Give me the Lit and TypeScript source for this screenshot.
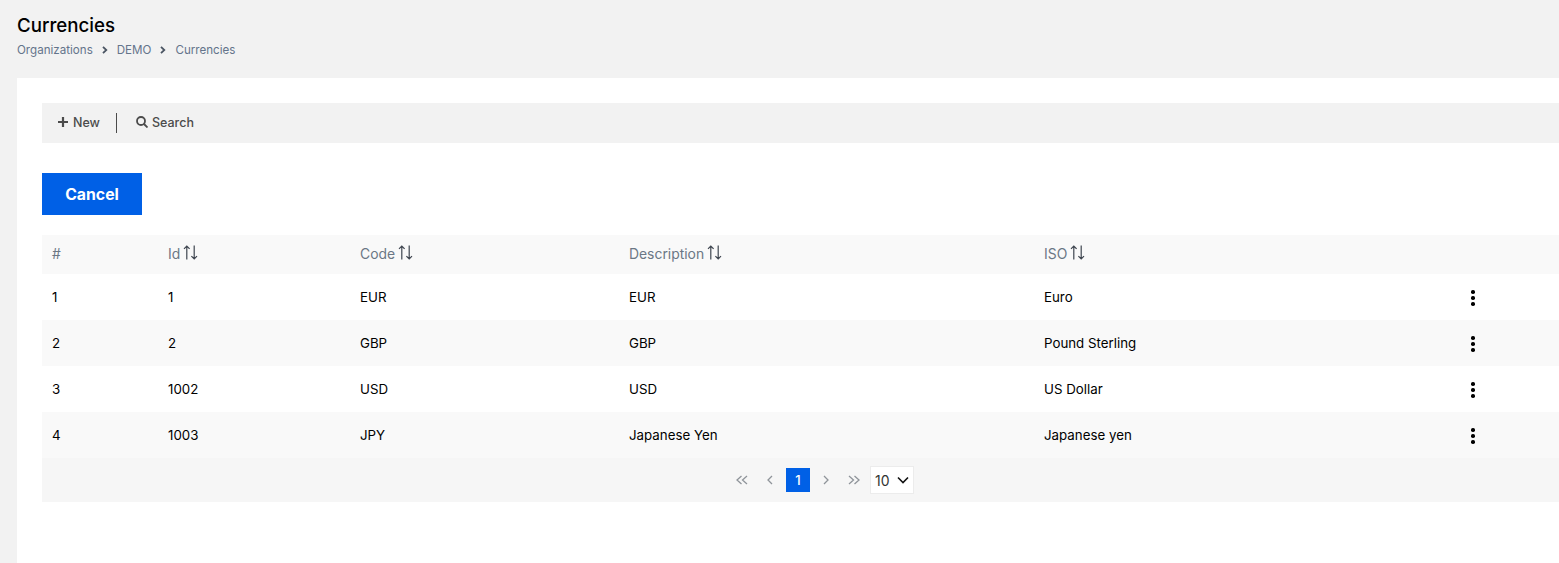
import {css, html, LitElement} from 'lit';
import {customElement} from 'lit/decorators.js';

const rows = [
    ["1", "1", "EUR", "EUR", "Euro"],
    ["2", "2", "GBP", "GBP", "Pound Sterling"],
    ["3", "1002", "USD", "USD", "US Dollar"],
    ["4", "1003", "JPY", "Japanese Yen", "Japanese yen"],
];

const sortIcon = html`<svg class="sort" width="15" height="15" viewBox="0 0 15 15" fill="none" stroke="#3f4650" stroke-width="1.2">
    <path d="M3.8 14.5V1M1 3.9L3.8 1L6.6 3.9"/>
    <path d="M11.2 .5V14M8.4 11.1L11.2 14L14 11.1"/>
</svg>`;

const chevron = html`<svg class="crumb-sep" width="6" height="8" viewBox="0 0 6 8" fill="none" stroke="#4b5563" stroke-width="1.8"><path d="M1 .8L4.3 4L1 7.2"/></svg>`;

const pageIcon = (d: string) => html`<span class="page-btn"><svg width="14" height="14" viewBox="0 0 14 14" fill="none" stroke="#8f949a" stroke-width="1.3"><path d=${d}/></svg></span>`;

@customElement("app-root")
export default class AppRoot extends LitElement {
    static styles = css`
        :host {
            display: block;
            height: 563px;
            overflow: hidden;
            background: #f2f2f2;
            font-family: "Inter", "Open Sans", sans-serif;
            color: #000;
        }

        .page-head { height: 78px; padding: 15px 0 0 17px; box-sizing: border-box; }
        h1 { margin: 0; font-size: 18.7px; line-height: 22px; font-weight: 500; }
        .crumbs {
            display: flex;
            align-items: center;
            gap: 9px;
            margin-top: 6px;
            font-size: 11.6px;
            line-height: 14px;
            color: #64748b;
        }

        .card {
            margin-left: 17px;
            padding: 25px 0 0 25px;
            height: 485px;
            box-sizing: border-box;
            background: white;
            overflow: hidden;
        }

        .toolbar {
            display: flex;
            align-items: center;
            height: 40px;
            padding: 0 0 2px 16px;
            box-sizing: border-box;
            background: #f2f2f2;
            font-size: 12.5px;
            font-weight: 500;
            color: #4b4b4b;
        }
        .tool { display: flex; align-items: center; gap: 4px; }
        .tool.new { gap: 5px; }
        .divider { width: 1px; height: 20px; margin: 2px 19px 0 16px; background: #4b4b4b; }

        .cancel {
            display: block;
            width: 100px;
            height: 42px;
            margin: 30px 0 20px;
            padding: 0;
            border: 0;
            background: #0060e6;
            color: white;
            font: 700 15.8px "Inter", sans-serif;
        }

        .table { width: 1558px; }
        .row {
            display: grid;
            grid-template-columns: 116px 192px 269px 415px 419px 1fr;
            align-items: center;
            height: 46px;
            font-size: 13.3px;
        }
        .row:nth-child(odd) { background: #f9f9f9; }
        .row > * { padding-left: 10px; }
        .row.head {
            height: 39px;
            box-sizing: border-box;
            padding-bottom: 2px;
            background: #f9f9f9;
            color: #6b7785;
            font-size: 13.9px;
            font-weight: 400;
        }
        .head-cell { display: flex; align-items: center; gap: 3px; }
        .sort { margin-top: -2px; }

        .dots { display: flex; flex-direction: column; gap: 2.5px; padding: 2px 0 0 18px; }
        .dots i { width: 3.5px; height: 3.5px; border-radius: 50%; background: #000; }

        .pager {
            display: flex;
            align-items: center;
            justify-content: center;
            height: 44px;
            background: #f6f6f6;
        }
        .page-btn { display: flex; justify-content: center; width: 28px; }
        .current {
            width: 24px;
            height: 24px;
            margin: 0 2px;
            display: flex;
            align-items: center;
            justify-content: center;
            background: #0060e6;
            color: white;
            font-size: 13px;
            font-weight: 500;
        }
        .size {
            display: flex;
            align-items: center;
            justify-content: space-between;
            width: 44px;
            height: 28px;
            margin-left: 2px;
            padding: 0 3px 0 4px;
            box-sizing: border-box;
            background: white;
            border: 1px solid #ececec;
            font-size: 14px;
            color: #333;
        }
    `;

    render() {
        return html`
            <div class="page-head">
                <h1>Currencies</h1>
                <div class="crumbs">
                    <span>Organizations</span>${chevron}<span>DEMO</span>${chevron}<span>Currencies</span>
                </div>
            </div>
            <div class="card">
                <div class="toolbar">
                    <span class="tool new">
                        <svg width="10" height="10" viewBox="0 0 10 10" stroke="#4b4b4b" stroke-width="2.2"><path d="M5 0V10M0 5H10"/></svg>
                        New
                    </span>
                    <span class="divider"></span>
                    <span class="tool">
                        <svg width="12" height="12" viewBox="0 0 12 12" fill="none" stroke="#4b4b4b" stroke-width="1.8"><circle cx="5" cy="5" r="4"/><path d="M8 8L11.5 11.5"/></svg>
                        Search
                    </span>
                </div>
                <button class="cancel">Cancel</button>
                <div class="table">
                    <div class="row head">
                        <span>#</span>
                        <span class="head-cell">Id ${sortIcon}</span>
                        <span class="head-cell">Code ${sortIcon}</span>
                        <span class="head-cell">Description ${sortIcon}</span>
                        <span class="head-cell">ISO ${sortIcon}</span>
                        <span></span>
                    </div>
                    ${rows.map(r => html`
                        <div class="row">
                            ${r.map(c => html`<span>${c}</span>`)}
                            <span class="dots"><i></i><i></i><i></i></span>
                        </div>
                    `)}
                    <div class="pager">
                        ${pageIcon("M6.5 3L2 7L6.5 11M12 3L7.5 7L12 11")}
                        ${pageIcon("M9 3L5 7L9 11")}
                        <span class="current">1</span>
                        ${pageIcon("M5 3L9 7L5 11")}
                        ${pageIcon("M2 3L6.5 7L2 11M7.5 3L12 7L7.5 11")}
                        <span class="size">10
                            <svg width="14" height="14" viewBox="0 0 14 14" fill="none" stroke="#111" stroke-width="1.6"><path d="M2 4.5L7 9.5L12 4.5"/></svg>
                        </span>
                    </div>
                </div>
            </div>
        `;
    }
}
